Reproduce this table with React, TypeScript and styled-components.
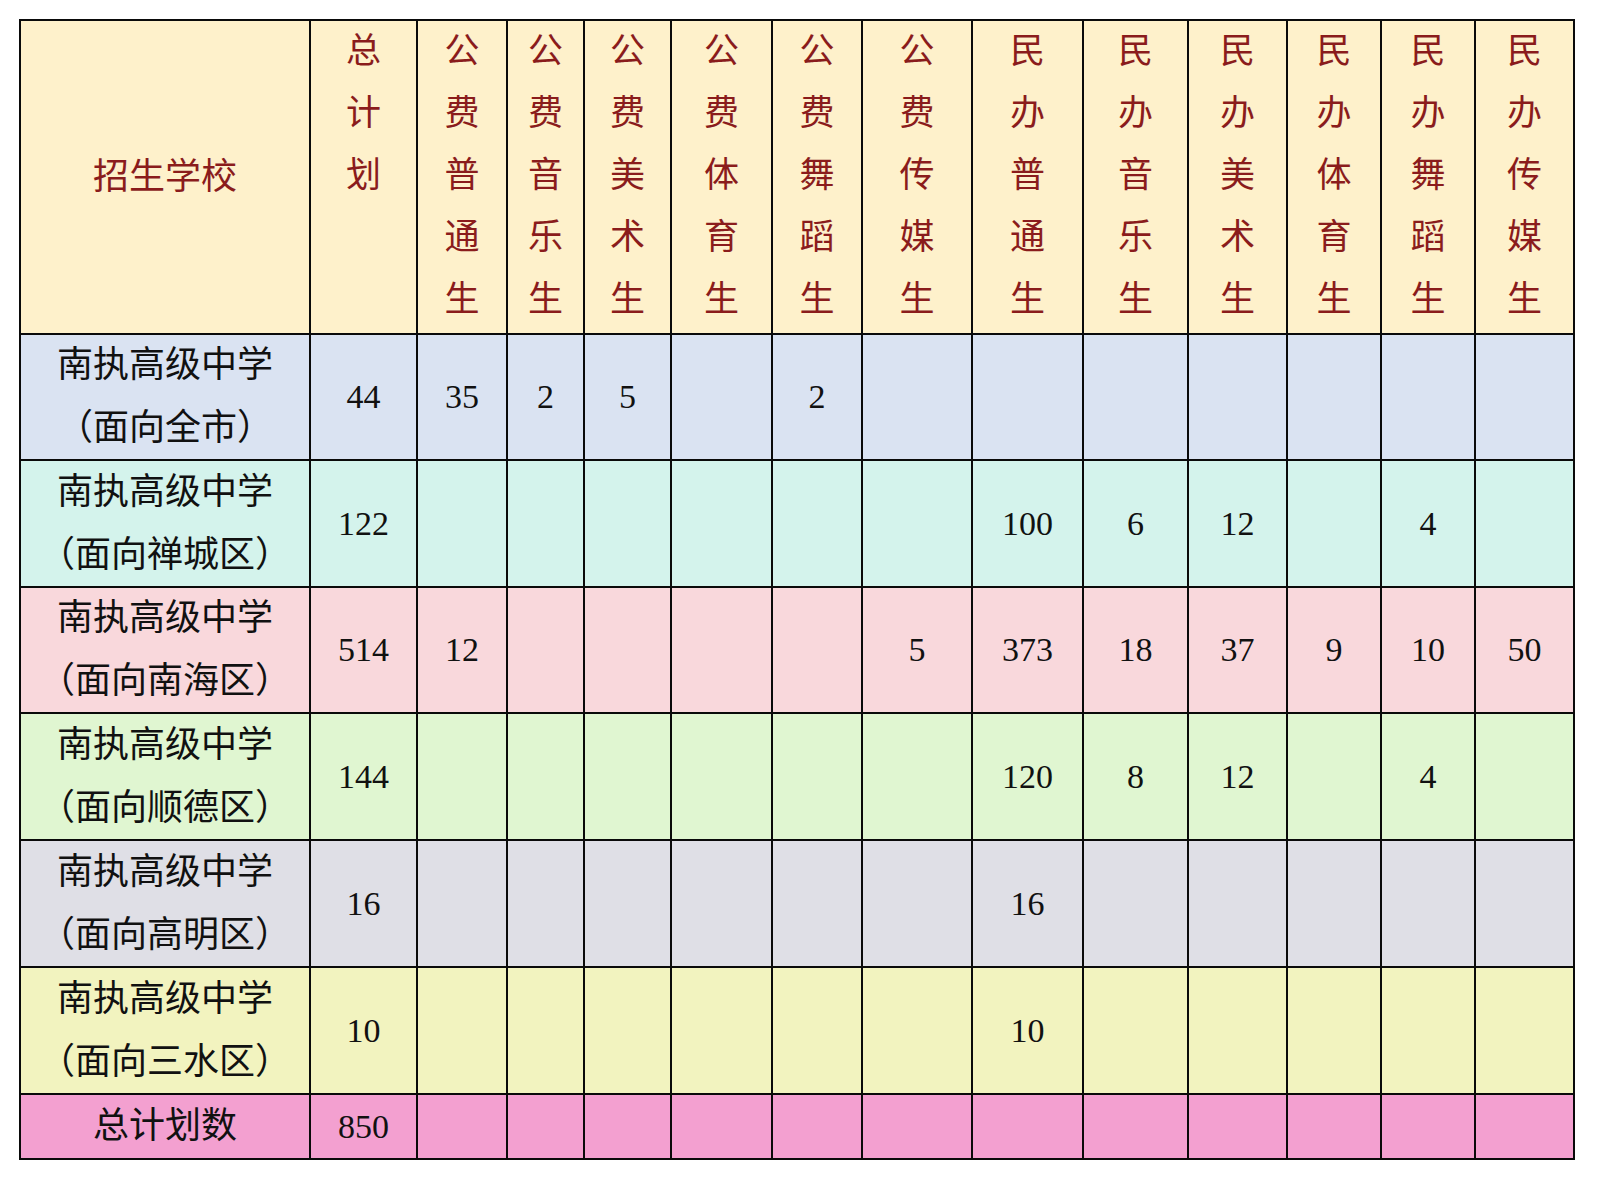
import React from "react";
import styled, { createGlobalStyle } from "styled-components";

const GlobalStyle = createGlobalStyle`
  html, body { margin: 0; padding: 0; background: #ffffff; }
  body { font-family: "Liberation Serif", "Noto Sans CJK SC", serif; }
`;

const Page = styled.div`
  padding: 19px 0 0 19px;
`;

const Sheet = styled.div`
  display: grid;
  grid-template-columns: 290px 107px 90px 77px 87px 101px 90px 110px 111px 105px 99px 94px 94px 99px;
  grid-template-rows: 314px 126px 127px 126px 127px 127px 127px 65px;
  width: max-content;
  border-left: 2px solid #0a0a0a;
  border-top: 2px solid #0a0a0a;
  font-family: "Liberation Serif", "Noto Sans CJK SC", serif;
  text-spacing-trim: space-all;
`;

const Cell = styled.div<{ $bg: string }>`
  box-sizing: border-box;
  border-right: 2px solid #0a0a0a;
  border-bottom: 2px solid #0a0a0a;
  background: ${(p) => p.$bg};
  display: flex;
  justify-content: center;
  align-items: center;
  color: #111111;
  font-size: 34px;
  overflow: hidden;
`;

const HeadCell = styled(Cell)<{ $top?: boolean }>`
  align-items: ${(p) => (p.$top ? "flex-start" : "center")};
  color: #8a1c1c;
`;

const VerticalLabel = styled.span`
  display: block;
  width: 1em;
  font-size: 35px;
  line-height: 62px;
  word-break: break-all;
  text-align: center;
`;

const SchoolName = styled.span`
  display: block;
  text-align: center;
  font-size: 36px;
  line-height: 63px;
  white-space: nowrap;
  text-spacing-trim: space-all;
`;

const Num = styled.span`
  font-size: 34px;
  line-height: 1;
`;

const HEADER_BG = "#fef1cb";

const columns = [
  "总计划",
  "公费普通生",
  "公费音乐生",
  "公费美术生",
  "公费体育生",
  "公费舞蹈生",
  "公费传媒生",
  "民办普通生",
  "民办音乐生",
  "民办美术生",
  "民办体育生",
  "民办舞蹈生",
  "民办传媒生",
];

type Row = { area: string; bg: string; values: (number | null)[] };

const rows: Row[] = [
  { area: "（面向全市）", bg: "#dae3f2", values: [44, 35, 2, 5, null, 2, null, null, null, null, null, null, null] },
  { area: "（面向禅城区）", bg: "#d4f3ec", values: [122, null, null, null, null, null, null, 100, 6, 12, null, 4, null] },
  { area: "（面向南海区）", bg: "#f9d8dc", values: [514, 12, null, null, null, null, 5, 373, 18, 37, 9, 10, 50] },
  { area: "（面向顺德区）", bg: "#e0f6d1", values: [144, null, null, null, null, null, null, 120, 8, 12, null, 4, null] },
  { area: "（面向高明区）", bg: "#dfdfe6", values: [16, null, null, null, null, null, null, 16, null, null, null, null, null] },
  { area: "（面向三水区）", bg: "#f2f3bf", values: [10, null, null, null, null, null, null, 10, null, null, null, null, null] },
];

const TOTAL_BG = "#f3a0d0";

export default function App() {
  return (
    <>
      <GlobalStyle />
      <Page>
        <Sheet>
          <HeadCell $bg={HEADER_BG}>
            <SchoolName>招生学校</SchoolName>
          </HeadCell>
          {columns.map((c) => (
            <HeadCell key={c} $bg={HEADER_BG} $top>
              <VerticalLabel>{c}</VerticalLabel>
            </HeadCell>
          ))}

          {rows.map((r) => (
            <React.Fragment key={r.area}>
              <Cell $bg={r.bg}>
                <SchoolName>
                  南执高级中学
                  <br />
                  {r.area}
                </SchoolName>
              </Cell>
              {r.values.map((v, i) => (
                <Cell key={i} $bg={r.bg}>
                  {v !== null && <Num>{v}</Num>}
                </Cell>
              ))}
            </React.Fragment>
          ))}

          <Cell $bg={TOTAL_BG}>
            <SchoolName>总计划数</SchoolName>
          </Cell>
          <Cell $bg={TOTAL_BG}>
            <Num>850</Num>
          </Cell>
          {columns.slice(1).map((c) => (
            <Cell key={c} $bg={TOTAL_BG} />
          ))}
        </Sheet>
      </Page>
    </>
  );
}
